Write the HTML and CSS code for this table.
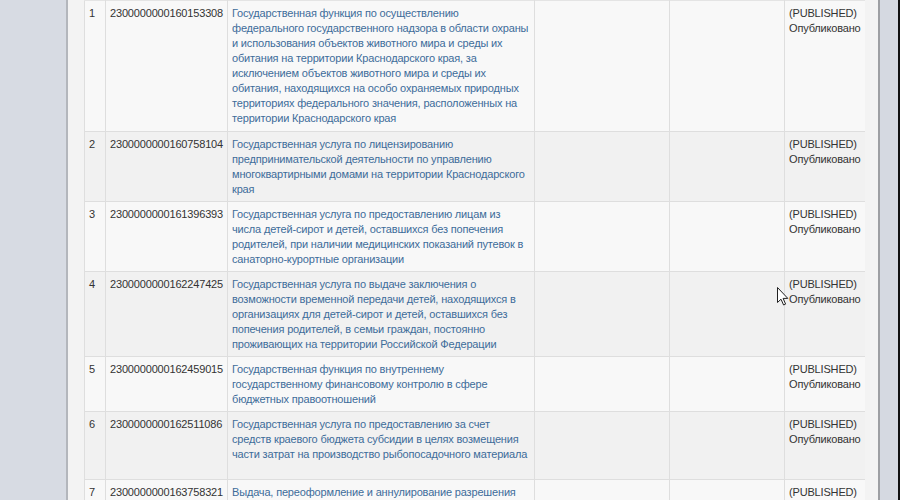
FILE: index.html
```html
<!DOCTYPE html>
<html lang="ru">
<head>
<meta charset="utf-8">
<link rel="stylesheet" href="styles.css">
</head>
<body>
<div class="screen">
  <aside class="side-left"></aside>
  <main class="content">
    <div class="table-wrap">
      <table class="grid">
        <colgroup>
          <col class="c-num"><col class="c-id"><col class="c-name"><col class="c-a"><col class="c-b"><col class="c-status">
        </colgroup>
        <tbody>
          <tr class="odd">
            <td>1</td><td>2300000000160153308</td>
            <td><a href="#">Государственная функция по осуществлению федерального государственного надзора в области охраны и использования объектов животного мира и среды их обитания на территории Краснодарского края, за исключением объектов животного мира и среды их обитания, находящихся на особо охраняемых природных территориях федерального значения, расположенных на территории Краснодарского края</a></td>
            <td></td><td></td><td>(PUBLISHED) Опубликовано</td>
          </tr>
          <tr class="even">
            <td>2</td><td>2300000000160758104</td>
            <td><a href="#">Государственная услуга по лицензированию предпринимательской деятельности по управлению многоквартирными домами на территории Краснодарского края</a></td>
            <td></td><td></td><td>(PUBLISHED) Опубликовано</td>
          </tr>
          <tr class="odd">
            <td>3</td><td>2300000000161396393</td>
            <td><a href="#">Государственная услуга по предоставлению лицам из числа детей-сирот и детей, оставшихся без попечения родителей, при наличии медицинских показаний путевок в санаторно-курортные организации</a></td>
            <td></td><td></td><td>(PUBLISHED) Опубликовано</td>
          </tr>
          <tr class="even">
            <td>4</td><td>2300000000162247425</td>
            <td><a href="#">Государственная услуга по выдаче заключения о возможности временной передачи детей, находящихся в организациях для детей-сирот и детей, оставшихся без попечения родителей, в семьи граждан, постоянно проживающих на территории Российской Федерации</a></td>
            <td></td><td></td><td>(PUBLISHED) Опубликовано</td>
          </tr>
          <tr class="odd">
            <td>5</td><td>2300000000162459015</td>
            <td><a href="#">Государственная функция по внутреннему государственному финансовому контролю в сфере бюджетных правоотношений</a></td>
            <td></td><td></td><td>(PUBLISHED) Опубликовано</td>
          </tr>
          <tr class="even tall">
            <td>6</td><td>2300000000162511086</td>
            <td><a href="#">Государственная услуга по предоставлению за счет средств краевого бюджета субсидии в целях возмещения части затрат на производство рыбопосадочного материала</a></td>
            <td></td><td></td><td>(PUBLISHED) Опубликовано</td>
          </tr>
          <tr class="odd">
            <td>7</td><td>2300000000163758321</td>
            <td><a href="#">Выдача, переоформление и аннулирование разрешения на осуществление деятельности по перевозке пассажиров и багажа легковым такси на территории Краснодарского края</a></td>
            <td></td><td></td><td>(PUBLISHED) Опубликовано</td>
          </tr>
        </tbody>
      </table>
    </div>
  </main>
  <aside class="side-right"></aside>
  <div class="edge"></div>
</div>
<svg class="cursor" width="12" height="19" viewBox="0 0 12 19"><path d="M0.5 0.5 L0.5 15.5 L4 12.2 L6.6 18 L8.6 17.1 L6.1 11.4 L10.8 11.4 Z" fill="#fff" stroke="#222" stroke-width="1"/></svg>
</body>
</html>
```
FILE: styles.css
```css
html, body {
  margin: 0;
  padding: 0;
  width: 900px;
  height: 500px;
  overflow: hidden;
  background: #f4f4f4;
}
.screen {
  display: flex;
  width: 900px;
  height: 500px;
  position: relative;
}
.side-left {
  width: 66px;
  flex: 0 0 66px;
  background: #d7dbe3;
  border-right: 2px solid #b3b6bc;
}
.content {
  flex: 0 0 810px;
  width: 810px;
  background: #f3f3f3;
  border-right: 2px solid #9d9fa3;
  overflow: hidden;
}
.table-wrap {
  margin-left: 16px;
  width: 781px;
  height: 500px;
  overflow: hidden;
  background: #fafafa;
}
.side-right {
  flex: 1 1 auto;
  background: #d5d9e1;
}
.edge {
  flex: 0 0 2px;
  background: #111;
}
.grid {
  border-collapse: collapse;
  table-layout: fixed;
  width: 781px;
  font-family: "Liberation Sans", Arial, sans-serif;
  font-size: 11px;
  letter-spacing: -0.17px;
  line-height: 15px;
  color: #333;
}
.c-num { width: 21px; }
.c-id { width: 122px; }
.c-name { width: 307px; }
.c-a { width: 135px; }
.c-b { width: 115px; }
.c-status { width: 81px; }
.grid td {
  border: 1px solid #dedede;
  padding: 5px 4px 4px 4px;
  vertical-align: top;
  white-space: normal;
}
.grid tr:first-child td { border-top-color: #e4e4e4; padding-bottom: 5px; }
.grid td:last-child { border-right-color: #ececec; }
.grid tr.odd td { background: #f8f8f8; }
.grid tr.even td { background: #f1f1f1; }
.grid tr.tall td { height: 58px; }
.grid a {
  color: #3d6c9a;
  text-decoration: none;
}
.cursor {
  position: absolute;
  left: 777px;
  top: 287px;
}
```
